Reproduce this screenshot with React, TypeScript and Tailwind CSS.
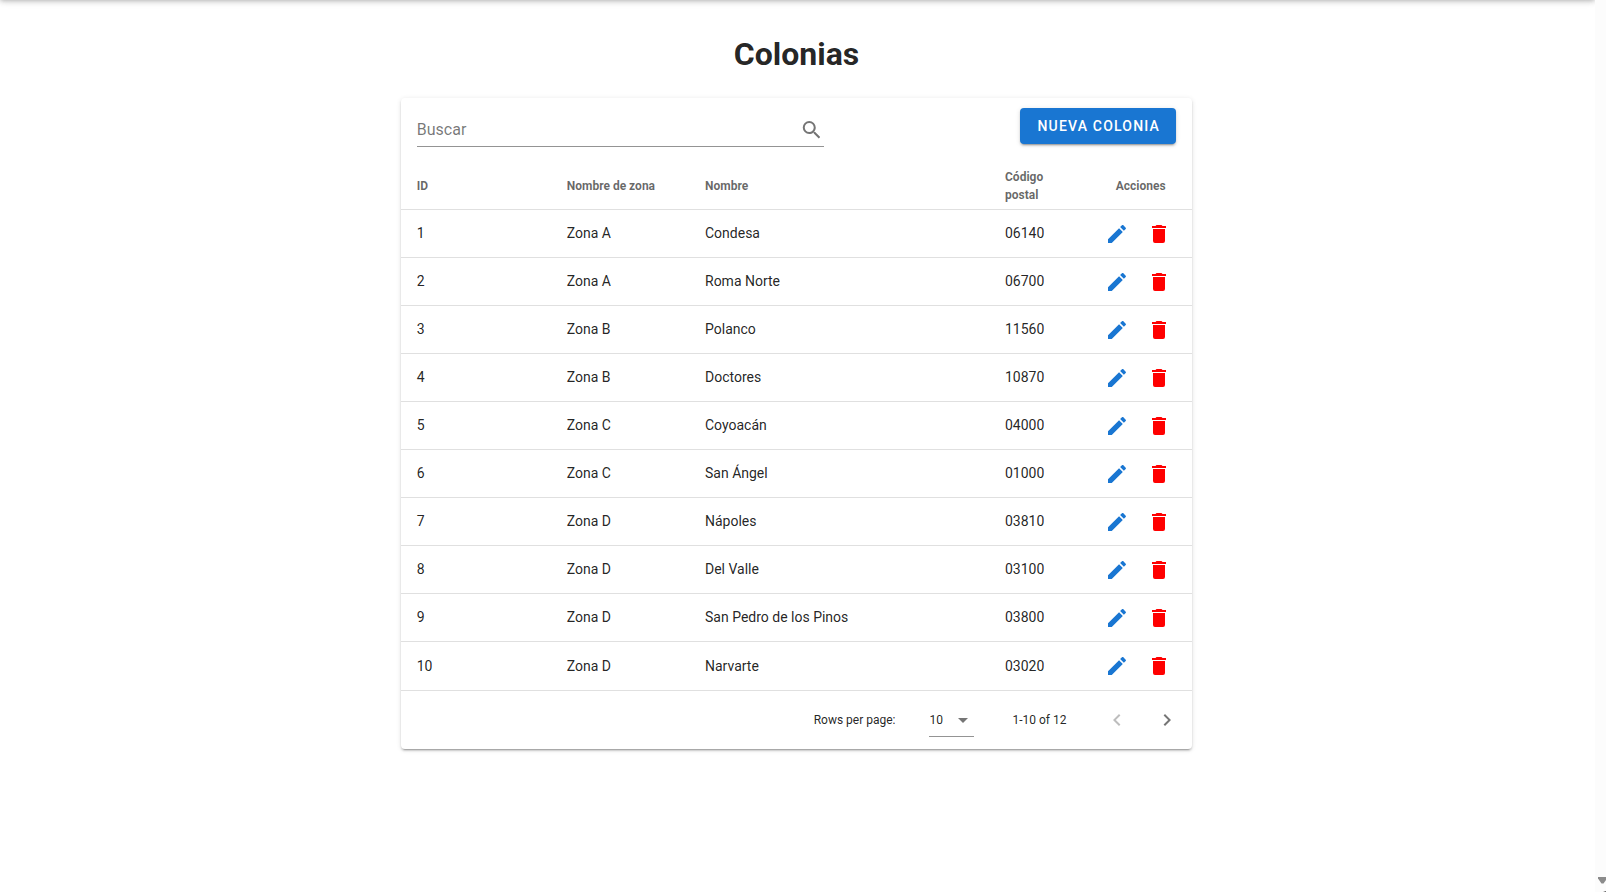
import React from "react";

const ICONS = {
  pencil:
    "M20.71,7.04C21.1,6.65 21.1,6 20.71,5.63L18.37,3.29C18,2.9 17.35,2.9 16.96,3.29L15.12,5.12L18.87,8.87M3,17.25V21H6.75L17.81,9.93L14.06,6.18L3,17.25Z",
  trash:
    "M19,4H15.5L14.5,3H9.5L8.5,4H5V6H19M6,19A2,2 0 0,0 8,21H16A2,2 0 0,0 18,19V7H6V19Z",
  magnify:
    "M9.5,3A6.5,6.5 0 0,1 16,9.5C16,11.11 15.41,12.59 14.44,13.73L14.71,14H15.5L20.5,19L19,20.5L14,15.5V14.71L13.73,14.44C12.59,15.41 11.11,16 9.5,16A6.5,6.5 0 0,1 3,9.5A6.5,6.5 0 0,1 9.5,3M9.5,5C7,5 5,7 5,9.5C5,12 7,14 9.5,14C12,14 14,12 14,9.5C14,7 12,5 9.5,5Z",
  menuDown: "M7,10L12,15L17,10H7Z",
  chevronLeft: "M15.41,16.58L10.83,12L15.41,7.41L14,6L8,12L14,18L15.41,16.58Z",
  chevronRight: "M8.59,16.58L13.17,12L8.59,7.41L10,6L16,12L10,18L8.59,16.58Z",
};

function Icon({ name, className = "" }: { name: keyof typeof ICONS; className?: string }) {
  return (
    <svg viewBox="0 0 24 24" fill="currentColor" aria-hidden="true" className={`size-6 shrink-0 ${className}`}>
      <path d={ICONS[name]} />
    </svg>
  );
}

interface Colonia {
  id: number;
  zona: string;
  nombre: string;
  cp: string;
}

const COLONIAS: Colonia[] = [
  { id: 1, zona: "Zona A", nombre: "Condesa", cp: "06140" },
  { id: 2, zona: "Zona A", nombre: "Roma Norte", cp: "06700" },
  { id: 3, zona: "Zona B", nombre: "Polanco", cp: "11560" },
  { id: 4, zona: "Zona B", nombre: "Doctores", cp: "10870" },
  { id: 5, zona: "Zona C", nombre: "Coyoacán", cp: "04000" },
  { id: 6, zona: "Zona C", nombre: "San Ángel", cp: "01000" },
  { id: 7, zona: "Zona D", nombre: "Nápoles", cp: "03810" },
  { id: 8, zona: "Zona D", nombre: "Del Valle", cp: "03100" },
  { id: 9, zona: "Zona D", nombre: "San Pedro de los Pinos", cp: "03800" },
  { id: 10, zona: "Zona D", nombre: "Narvarte", cp: "03020" },
];

const GRID = "grid grid-cols-[150px_138.25px_300px_98px_73px] items-center px-4";

function Toolbar() {
  return (
    <div className="flex h-16 items-start justify-between px-4 pt-2.5">
      <div className="mt-1 flex h-[35px] w-[407px] items-center justify-between border-b border-black/42 pt-0.5 text-black/54">
        <span className="text-base">Buscar</span>
        <Icon name="magnify" className="-translate-x-[0.25px]" />
      </div>
      <button className="h-9 w-[156px] rounded bg-[#1976d2] pl-0.5 text-sm font-medium tracking-[1.18px] text-white shadow-[0_3px_1px_-2px_rgba(0,0,0,.2),0_2px_2px_0_rgba(0,0,0,.14),0_1px_5px_0_rgba(0,0,0,.12)]">
        NUEVA COLONIA
      </button>
    </div>
  );
}

function Row({ row }: { row: Colonia }) {
  return (
    <div className={`${GRID} group h-12 border-b border-black/12 text-sm last:border-b-0`}>
      <span className="pb-0.5 group-last:pb-0">{row.id}</span>
      <span className="pb-0.5 group-last:pb-0">{row.zona}</span>
      <span className="pb-0.5 group-last:pb-0">{row.nombre}</span>
      <span className="pb-0.5 group-last:pb-0">{row.cp}</span>
      <span className="flex gap-[17.5px] pl-0.5">
        <Icon name="pencil" className="text-[#1976d2]" />
        <Icon name="trash" className="text-[#ff0000]" />
      </span>
    </div>
  );
}

function Footer() {
  return (
    <div className="flex h-[59px] items-center justify-end border-t border-black/12 pr-[13.25px] text-xs">
      <span>Rows per page:</span>
      <span className="ml-[34px] flex h-[34px] w-[45px] items-center justify-between border-b border-black/42">
        10
        <Icon name="menuDown" className="-mr-px text-black/54" />
      </span>
      <span className="ml-[38px]">1-10 of 12</span>
      <Icon name="chevronLeft" className="ml-[38px] text-black/26" />
      <Icon name="chevronRight" className="ml-[26px] text-black/54" />
    </div>
  );
}

export default function App() {
  return (
    <div className="flex h-[892px] w-[1606px] overflow-hidden bg-white font-[Roboto,sans-serif] text-black/87">
      <div className="flex w-[1595px] flex-col overflow-hidden">
        <header className="-mt-[58px] h-14 shrink-0 shadow-[0_2px_4px_-1px_rgba(0,0,0,.2),0_4px_5px_0_rgba(0,0,0,.14),0_1px_10px_0_rgba(0,0,0,.12)]" />
        <main className="flex flex-col items-center">
          <h1 className="mt-8 mr-[2px] text-[32px] leading-[48px] font-bold">Colonias</h1>
          <section className="mt-5 mr-[2.5px] w-[791px] rounded bg-white shadow-[0_3px_1px_-2px_rgba(0,0,0,.2),0_2px_2px_0_rgba(0,0,0,.14),0_1px_5px_0_rgba(0,0,0,.12)]">
            <Toolbar />
            <div className={`${GRID} h-12 border-b border-black/12 text-xs leading-[18px] font-bold text-black/60`}>
              <span>ID</span>
              <span>Nombre de zona</span>
              <span>Nombre</span>
              <span className="w-[50px]">Código postal</span>
              <span className="pl-[12.75px]">Acciones</span>
            </div>
            <div>
              {COLONIAS.map((row) => (
                <Row key={row.id} row={row} />
              ))}
            </div>
            <Footer />
          </section>
        </main>
      </div>
      <aside className="flex w-[11px] flex-col items-end justify-end bg-[#fcfcfc]">
        <svg viewBox="0 0 8 15" className="h-[15px] w-2">
          <path d="M0 0H8V3L5.5 6.5H3.5L0 1.5Z" fill="#8b8b8b" />
          <path d="M5 15L8 14V15Z" fill="#555" />
        </svg>
      </aside>
    </div>
  );
}
